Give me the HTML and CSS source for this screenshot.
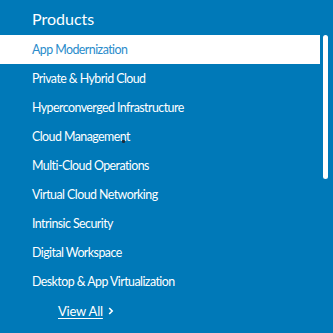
FILE: index.html
```html
<!DOCTYPE html>
<html>
<head>
<meta charset="utf-8">
<link rel="stylesheet" href="styles.css">
</head>
<body>
<div class="panel">
  <div class="title">Products</div>
  <div class="menu">
    <ul class="list">
      <li class="item active">App Modernization</li>
      <li class="item">Private &amp; Hybrid Cloud</li>
      <li class="item">Hyperconverged Infrastructure</li>
      <li class="item">Cloud Management</li>
      <li class="item">Multi-Cloud Operations</li>
      <li class="item">Virtual Cloud Networking</li>
      <li class="item">Intrinsic Security</li>
      <li class="item">Digital Workspace</li>
      <li class="item">Desktop &amp; App Virtualization</li>
    </ul>
    <div class="scrollbar"></div>
    <div class="cursor-dot"></div>
  </div>
  <div class="viewall"><span class="link">View All</span><svg class="chev" width="6" height="8" viewBox="0 0 6 8"><path d="M1.2 1 L4.2 4 L1.2 7" fill="none" stroke="#fff" stroke-width="1.6"/></svg></div>
</div>
</body>
</html>
```
FILE: styles.css
```css
html, body {
  margin: 0;
  padding: 0;
  background: #0079b8;
}
body {
  font-family: Lato, "Open Sans", sans-serif;
  color: #fff;
  width: 333px;
  height: 333px;
  overflow: hidden;
}
.panel {
  display: flex;
  flex-direction: column;
}
.title {
  height: 35px;
  padding-left: 32px;
  font-size: 16px;
  line-height: 38px;
  box-sizing: border-box;
}
.menu {
  position: relative;
}
.list {
  list-style: none;
  margin: 0;
  padding: 0;
  width: 320px;
}
.item {
  height: 29px;
  line-height: 29px;
  padding-left: 32px;
  font-size: 12.4px;
  letter-spacing: -0.55px;
}
.item.active {
  background: #fff;
  color: #2a8ccb;
}
.scrollbar {
  position: absolute;
  left: 323px;
  top: 0;
  width: 5px;
  height: 144px;
  background: #fff;
  border-radius: 3px;
}
.cursor-dot {
  position: absolute;
  left: 122px;
  top: 105px;
  width: 3px;
  height: 3px;
  border-radius: 1px;
  background: #1d2b38;
}
.viewall {
  padding-left: 58px;
  height: 29px;
  display: flex;
  align-items: center;
  gap: 5px;
  font-size: 13px;
}
.link {
  text-decoration: underline;
  text-underline-offset: 2px;
  letter-spacing: -0.2px;
}
.chev {
  margin-top: 1px;
}
```
